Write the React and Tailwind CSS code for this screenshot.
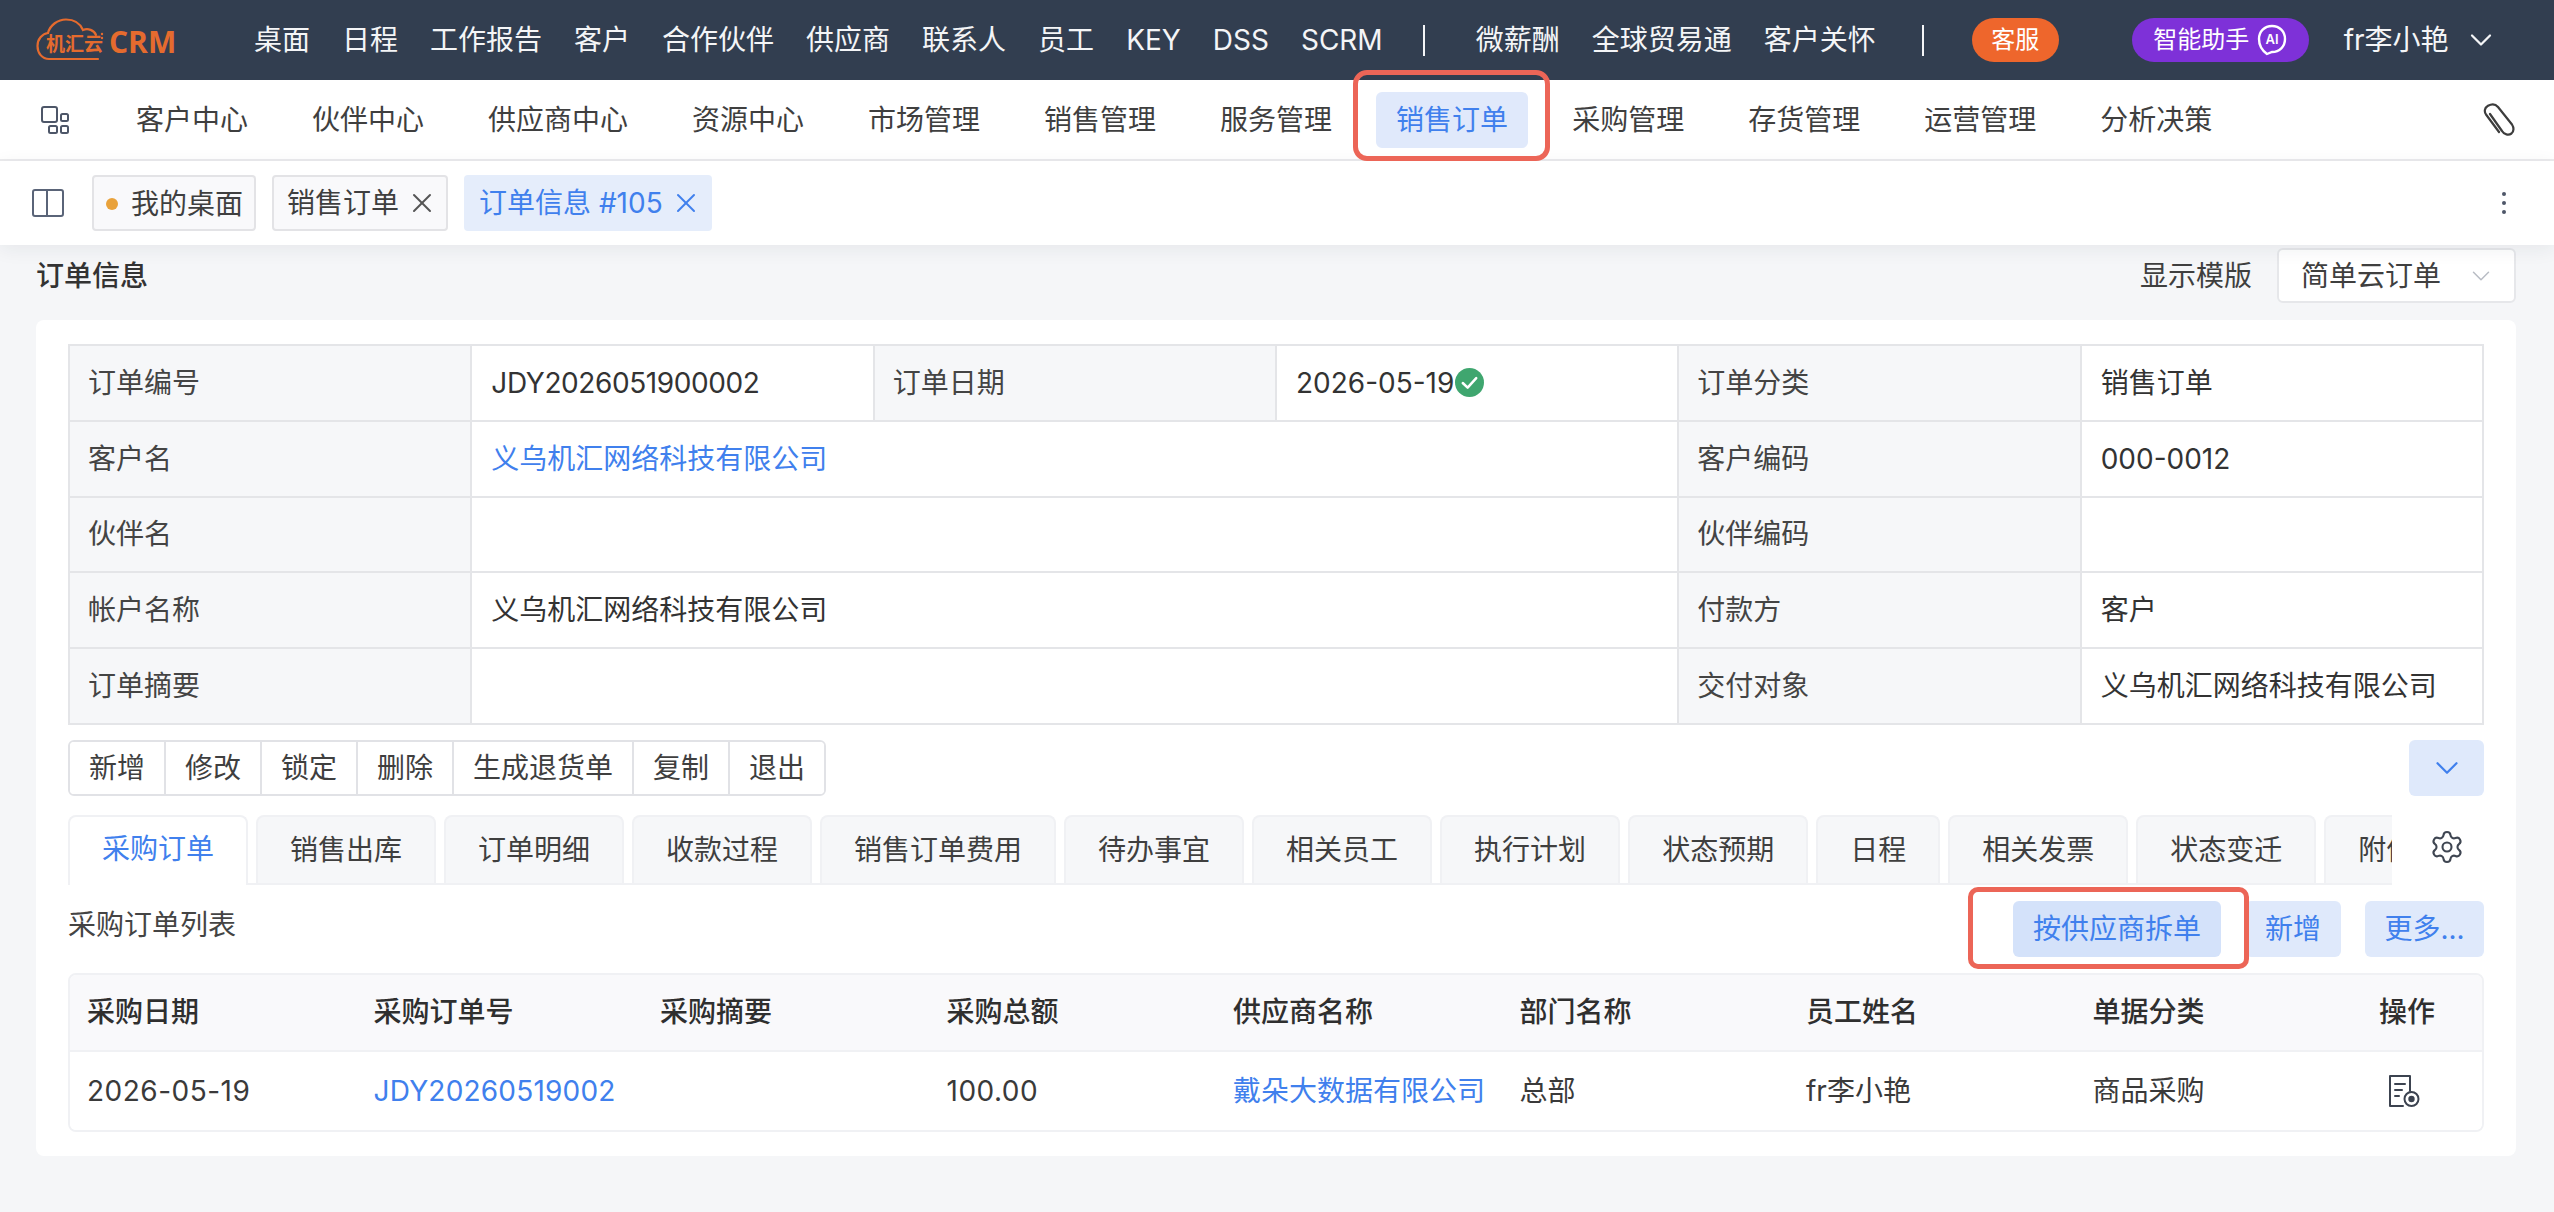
import React from "react";
import { ChevronDown, Settings, X } from "lucide-react";

const FONT = "font-['Inter','Noto_Sans_CJK_SC',sans-serif]";

function Logo() {
  return (
    <svg width="140" height="44" viewBox="0 0 140 44" fill="none" className="shrink-0">
      <path
        d="M62 41 H13 C6 41 1.500 35 1.500 28 C1.500 21 6 16 12 15 C14 7 22 1.500 30 1.500 C38 1.500 44 5 47 12 C52 10 58 12 60 17"
        stroke="#e56b2e"
        strokeWidth="2.200"
        strokeLinecap="round"
      />
      <circle cx="66" cy="16" r="1.200" fill="#e56b2e" />
      <circle cx="66" cy="20" r="1.200" fill="#e56b2e" />
      <text x="10" y="33" fontSize="19" fontWeight="700" fill="#e56b2e" fontFamily="'Noto Sans CJK SC',sans-serif">机汇云</text>
      <text x="73" y="35" fontSize="30" fontWeight="700" fill="#e56b2e" fontFamily="'Open Sans',sans-serif">CRM</text>
    </svg>
  );
}

function AiBubble() {
  return (
    <svg width="30" height="32" viewBox="0 0 30 32" fill="none">
      <path d="M15 2 C22.500 2 28 7.500 28 15 C28 22.500 22.500 28 15 28 L10 30 C4.500 26 2 21 2 15 C2 7.500 7.500 2 15 2 Z" stroke="white" strokeWidth="2.400" />
      <text x="15" y="20" textAnchor="middle" fontSize="13" fontWeight="600" fill="white" fontFamily="Inter,sans-serif">AI</text>
    </svg>
  );
}

function GridIcon() {
  return (
    <svg width="28" height="28" viewBox="0 0 28 28" fill="none" stroke="#4d5668" strokeWidth="2">
      <rect x="1" y="1" width="15" height="15" rx="2" />
      <rect x="20" y="8" width="7" height="7" rx="1.500" />
      <rect x="8" y="20" width="8" height="7" rx="1.500" />
      <rect x="20" y="20" width="7" height="7" rx="1.500" />
    </svg>
  );
}

function ClipIcon() {
  return (
    <svg width="34" height="34" viewBox="0 0 34 34" fill="none" stroke="#3d3d3d" strokeWidth="2.200" strokeLinecap="round" strokeLinejoin="round">
      <path d="M9 11 L21 28 C23 31.500 27.500 32.500 30.500 30.500 C33 28.500 33 24.500 31 21.500 L17 4 C14.500 1 10.500 0.800 7 2.800 C3.500 4.800 3 8.500 5 11.500 L18 29" />
    </svg>
  );
}

function PanelIcon() {
  return (
    <svg width="32" height="28" viewBox="0 0 32 28" fill="none" stroke="#5a6478" strokeWidth="2">
      <rect x="1" y="1" width="30" height="26" rx="2" />
      <line x1="15" y1="1" x2="15" y2="27" />
    </svg>
  );
}

function CheckBadge() {
  return (
    <svg width="29" height="29" viewBox="0 0 28 28" className="ml-[1px] shrink-0">
      <circle cx="14" cy="14" r="14" fill="#3fa66f" />
      <path d="M7.500 14.500 L12.200 19 L20.500 9.800" fill="none" stroke="white" strokeWidth="2.400" strokeLinecap="round" strokeLinejoin="round" />
    </svg>
  );
}

function DocView() {
  return (
    <svg width="32" height="32" viewBox="0 0 32 32" fill="none" stroke="#3c4350" strokeWidth="2" strokeLinecap="round" strokeLinejoin="round">
      <path d="M15 31 H2 V1 H22 V16" />
      <line x1="7" y1="9" x2="17" y2="9" />
      <line x1="7" y1="15" x2="14" y2="15" />
      <line x1="7" y1="21" x2="11" y2="21" />
      <circle cx="23.500" cy="24" r="7" />
      <circle cx="23.500" cy="24" r="2.200" fill="#3c4350" />
    </svg>
  );
}

const topNav = ["桌面", "日程", "工作报告", "客户", "合作伙伴", "供应商", "联系人", "员工", "KEY", "DSS", "SCRM"];
const secondNav = ["客户中心", "伙伴中心", "供应商中心", "资源中心", "市场管理", "销售管理", "服务管理", "销售订单", "采购管理", "存货管理", "运营管理", "分析决策"];
const actions = ["新增", "修改", "锁定", "删除", "生成退货单", "复制", "退出"];
const tabs = ["采购订单", "销售出库", "订单明细", "收款过程", "销售订单费用", "待办事宜", "相关员工", "执行计划", "状态预期", "日程", "相关发票", "状态变迁", "附件管理"];
const columns = ["采购日期", "采购订单号", "采购摘要", "采购总额", "供应商名称", "部门名称", "员工姓名", "单据分类", "操作"];

function Label({ children }) {
  return <td className="border-2 border-[#e4e5e8] bg-[#f6f7f9] px-[18px] text-[#444]">{children}</td>;
}

function Value({ children, span = 1, link = false }) {
  return (
    <td colSpan={span} className={`border-2 border-[#e4e5e8] px-[19px] ${link ? "text-[#4080ed]" : "text-[#333]"}`}>
      {children}
    </td>
  );
}

function Cell({ children, className = "" }) {
  return <div className={`flex min-w-0 items-center pl-[17px] pr-[17px] ${className}`}>{children}</div>;
}

export default function App() {
  return (
    <div className={`relative h-[1212px] w-full overflow-hidden bg-[#f5f6f8] text-[28px] leading-none text-[#333] ${FONT}`}>
      <header className="flex h-[80px] items-center bg-[#323e50] pl-[36px] text-[#f4f5f7]">
        <div className="w-[218px] shrink-0">
          <Logo />
        </div>
        <nav className="flex gap-[32px]">
          {topNav.map((t) => (
            <span key={t}>{t}</span>
          ))}
        </nav>
        <span className="ml-[40px] h-[31px] w-[2px] bg-[#f4f5f7]" />
        <nav className="ml-[51px] flex gap-[32px]">
          <span>微薪酬</span>
          <span>全球贸易通</span>
          <span>客户关怀</span>
        </nav>
        <span className="ml-[46px] h-[31px] w-[2px] bg-[#f4f5f7]" />
        <span className="ml-[48px] flex h-[44px] w-[87px] items-center justify-center rounded-full bg-[#ee662c] text-[24px] text-white">客服</span>
        <span className="ml-[73px] flex h-[44px] w-[177px] items-center justify-center gap-[8px] rounded-full bg-[#7e31d8] text-[24px] text-white">
          智能助手
          <AiBubble />
        </span>
        <span className="ml-[35px]">fr李小艳</span>
        <ChevronDown className="ml-[14px]" size={36} strokeWidth={1.500} />
      </header>

      <div className="flex h-[81px] items-center border-b-2 border-[#ebebed] bg-white pl-[41px] pr-[39px]">
        <GridIcon />
        <nav className="ml-[47px] flex gap-[24px]">
          {secondNav.map((t) => (
            <span
              key={t}
              className={`flex h-[56px] items-center rounded-[6px] px-[20px] ${t === "销售订单" ? "bg-[#e0e9fb] text-[#4080ed]" : "text-[#3f3f3f]"}`}
            >
              {t}
            </span>
          ))}
        </nav>
        <span className="ml-auto">
          <ClipIcon />
        </span>
      </div>

      <div className="relative z-10 flex h-[84px] items-center bg-white pl-[32px] pr-[48px] shadow-[0_4px_18px_rgba(30,40,60,0.07)]">
        <PanelIcon />
        <span className="ml-[28px] flex h-[56px] w-[164px] items-center gap-[13px] rounded-[4px] border-2 border-[#e3e3e6] bg-[#f9f9fb] pl-[12px] pt-[2px] text-[#3f3f3f]">
          <span className="h-[12px] w-[12px] rounded-full bg-[#e9a23b]" />
          我的桌面
        </span>
        <span className="ml-[16px] flex h-[56px] w-[176px] items-center rounded-[4px] border-2 border-[#e3e3e6] bg-[#f9f9fb] pl-[13px] text-[#3f3f3f]">
          销售订单
          <X className="ml-[7px]" size={32} strokeWidth={1.500} color="#555" />
        </span>
        <span className="ml-[16px] flex h-[56px] w-[248px] items-center rounded-[4px] bg-[#e5edfb] pl-[15px] text-[#4080ed]">
          订单信息 #105
          <X className="ml-[7px]" size={32} strokeWidth={1.500} />
        </span>
        <span className="ml-auto flex flex-col gap-[5px]">
          <span className="h-[4px] w-[4px] rounded-full bg-[#4d5668]" />
          <span className="h-[4px] w-[4px] rounded-full bg-[#4d5668]" />
          <span className="h-[4px] w-[4px] rounded-full bg-[#4d5668]" />
        </span>
      </div>

      <main className="pl-[36px] pr-[38px]">
        <div className="mb-[14px] flex h-[61px] items-center">
          <h1 className="font-medium text-[#333]">订单信息</h1>
          <span className="ml-auto text-[#3f3f3f]">显示模版</span>
          <div className="ml-[25px] flex h-[55px] w-[239px] items-center justify-between rounded-[6px] border-2 border-[#e6e7ea] bg-white pl-[22px] pr-[18px]">
            <span className="text-[#3f3f3f]">简单云订单</span>
            <ChevronDown size={30} strokeWidth={1.200} color="#b8bcc4" />
          </div>
        </div>

        <section className="rounded-[8px] bg-white px-[32px] pb-[24px] pt-[24px]">
          <table className="w-full table-fixed border-collapse border-spacing-0">
            <tbody>
              <tr className="h-[75.8px]">
                <Label>订单编号</Label>
                <Value>
                  <span className="tracking-[-0.4px]">JDY2026051900002</span>
                </Value>
                <Label>订单日期</Label>
                <Value>
                  <span className="flex items-center">
                    2026-05-19
                    <CheckBadge />
                  </span>
                </Value>
                <Label>订单分类</Label>
                <Value>销售订单</Value>
              </tr>
              <tr className="h-[75.8px]">
                <Label>客户名</Label>
                <Value span={3} link>义乌机汇网络科技有限公司</Value>
                <Label>客户编码</Label>
                <Value>000-0012</Value>
              </tr>
              <tr className="h-[75.8px]">
                <Label>伙伴名</Label>
                <Value span={3} />
                <Label>伙伴编码</Label>
                <Value />
              </tr>
              <tr className="h-[75.8px]">
                <Label>帐户名称</Label>
                <Value span={3}>义乌机汇网络科技有限公司</Value>
                <Label>付款方</Label>
                <Value>客户</Value>
              </tr>
              <tr className="h-[75.8px]">
                <Label>订单摘要</Label>
                <Value span={3} />
                <Label>交付对象</Label>
                <Value>义乌机汇网络科技有限公司</Value>
              </tr>
            </tbody>
          </table>

          <div className="mt-[15px] flex items-start justify-between">
            <div className="flex h-[56px] overflow-hidden rounded-[6px] border-2 border-[#e1e2e6]">
              {actions.map((a) => (
                <span key={a} className="flex items-center border-l-2 border-[#e1e2e6] bg-white px-[19px] text-[#3f3f3f] first:border-l-0">
                  {a}
                </span>
              ))}
            </div>
            <span className="flex h-[56px] w-[75px] items-center justify-center rounded-[6px] bg-[#dfe9fb]">
              <ChevronDown size={38} strokeWidth={1.400} color="#4080ed" />
            </span>
          </div>

          <div className="mt-[19px] flex items-start">
            <div className="flex h-[70px] w-[2324px] items-start gap-[8px] overflow-hidden shadow-[inset_0_-2px_0_#f0f1f4]">
              {tabs.map((t, i) => (
                <span
                  key={t}
                  className={`flex shrink-0 items-center whitespace-nowrap rounded-t-[8px] border-2 px-[32px] ${
                    i === 0
                      ? "h-[70px] border-[#f0f1f4] border-b-0 bg-white pb-[4px] text-[#4080ed]"
                      : "h-[68px] border-[#f0f1f4] border-b-0 bg-[#f6f7f9] text-[#3f3f3f]"
                  }`}
                >
                  {t}
                </span>
              ))}
            </div>
            <span className="ml-[37px] mt-[14px]">
              <Settings size={36} strokeWidth={1.400} color="#3f4652" />
            </span>
          </div>

          <div className="mt-[16px] flex h-[56px] items-center">
            <span className="mb-[8px] text-[#444]">采购订单列表</span>
            <span className="ml-auto flex h-[56px] items-center rounded-[6px] bg-[#d4e2fa] px-[20px] text-[#4080ed]">按供应商拆单</span>
            <span className="ml-[24px] flex h-[56px] items-center rounded-[6px] bg-[#dfe9fb] px-[20px] text-[#4080ed]">新增</span>
            <span className="ml-[24px] flex h-[56px] w-[119px] items-center justify-center rounded-[6px] bg-[#dfe9fb] text-[#4080ed]">更多...</span>
          </div>

          <div className="mt-[16px] overflow-hidden rounded-[8px] border-2 border-[#f0f1f4]">
            <div className="grid h-[77px] grid-cols-[repeat(8,286.500px)_1fr] border-b-2 border-[#f0f1f4] bg-[#f9f9fb] font-medium text-[#2f2f2f]">
              {columns.map((c) => (
                <Cell key={c}>{c}</Cell>
              ))}
            </div>
            <div className="grid h-[78px] grid-cols-[repeat(8,286.500px)_1fr] bg-white text-[#3a3a3a]">
              <Cell className="tracking-[0.5px]">2026-05-19</Cell>
              <Cell className="text-[#4080ed]">
                <span className="block overflow-hidden whitespace-nowrap tracking-[0.2px]">JDY20260519002 (戴朵大数据有限公司)</span>
              </Cell>
              <Cell />
              <Cell className="tracking-[0.5px]">100.00</Cell>
              <Cell className="text-[#4080ed]">
                <span className="whitespace-nowrap">戴朵大数据有限公司</span>
              </Cell>
              <Cell>总部</Cell>
              <Cell>fr李小艳</Cell>
              <Cell>商品采购</Cell>
              <Cell className="pl-[26px]">
                <DocView />
              </Cell>
            </div>
          </div>
        </section>
      </main>

      <span className="absolute left-[1353px] top-[70px] z-20 h-[91px] w-[197px] rounded-[14px] border-[5px] border-[#ec6557]" />
      <span className="absolute left-[1968px] top-[887px] z-20 h-[82px] w-[281px] rounded-[10px] border-[5px] border-[#ec6557]" />
    </div>
  );
}
